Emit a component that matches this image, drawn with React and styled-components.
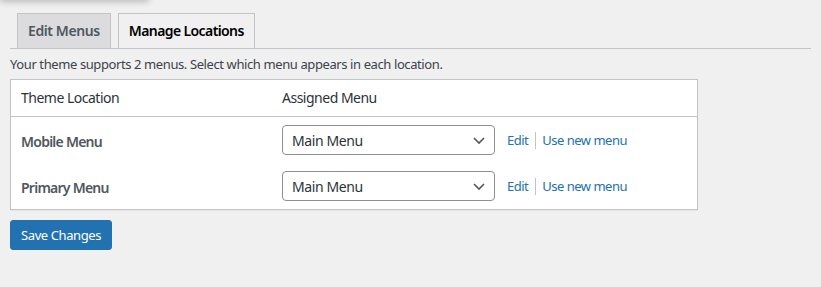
import React from "react";
import styled, { createGlobalStyle } from "styled-components";

const Global = createGlobalStyle`
  html, body { margin: 0; padding: 0; background: #f0f0f1; }
  body {
    font-family: "Noto Sans", "Open Sans", "DejaVu Sans", sans-serif;
    font-size: 13px;
    letter-spacing: -0.4px;
    color: #3c434a;
  }
`;

const Page = styled.div`
  position: relative;
  padding: 0 10px;
`;

const TopShadow = styled.div`
  position: absolute;
  left: 0;
  top: -20px;
  width: 149px;
  height: 20px;
  background: #f0f0f1;
  box-shadow: 0 2px 6px rgba(0, 0, 0, 0.22);
`;

const TabBar = styled.div`
  display: flex;
  padding-top: 13px;
  border-bottom: 1px solid #c3c4c7;
`;

const Tab = styled.div`
  margin-left: 7px;
  margin-bottom: -1px;
  padding: 5px 10px;
  line-height: 24px;
  font-size: 14px;
  font-weight: 600;
  letter-spacing: ${(p) => (p.$active ? "-0.6px" : "-0.4px")};
  border: 1px solid #c3c4c7;
  background: ${(p) => (p.$active ? "#f0f0f1" : "#dcdcde")};
  color: ${(p) => (p.$active ? "#000" : "#50575e")};
`;

const Intro = styled.p`
  margin: 5px 0 5px;
  line-height: 20px;
  color: #3c434a;
`;

const Table = styled.div`
  width: 688px;
  box-sizing: border-box;
  background: #fff;
  border: 1px solid #c3c4c7;
  box-shadow: 0 1px 1px rgba(0, 0, 0, 0.04);
  display: grid;
  grid-template-columns: 261px 1fr;
`;

const Th = styled.div`
  padding: 8px 10px;
  line-height: 20px;
  font-size: 14px;
  letter-spacing: -0.5px;
  color: #2c3338;
  border-bottom: 1px solid #c3c4c7;
`;

const Td = styled.div`
  padding: 8px 10px;
  display: flex;
  align-items: center;
  gap: 12px;
`;

const LocationLabel = styled.span`
  font-size: 14px;
  font-weight: 600;
  letter-spacing: -0.75px;
  color: #50575e;
  padding-top: 3px;
`;

const SelectBox = styled.div`
  box-sizing: border-box;
  width: 213px;
  height: 30px;
  border: 1px solid #8c8f94;
  border-radius: 4px;
  background: #fff;
  display: flex;
  align-items: center;
  justify-content: space-between;
  padding: 0 8px 0 9px;
  font-size: 14px;
  letter-spacing: -0.4px;
  color: #2c3338;
`;

const Links = styled.span`
  display: flex;
  align-items: center;
  font-size: 13px;
  letter-spacing: -0.5px;
`;

const Link = styled.a`
  color: #2271b1;
  text-decoration: none;
`;

const Sep = styled.span`
  display: inline-block;
  width: 1px;
  height: 17px;
  background: #c3c4c7;
  margin: 0 6px 0 7px;
`;

const SaveButton = styled.button`
  margin-top: 10px;
  height: 30px;
  padding: 0 10px;
  border: 1px solid #2271b1;
  border-radius: 3px;
  background: #2271b1;
  color: #fff;
  font-family: inherit;
  font-size: 13px;
  letter-spacing: -0.4px;
  cursor: pointer;
`;

const Chevron = () => (
  <svg width="14" height="14" viewBox="0 0 14 14" aria-hidden="true">
    <path d="M2 5l5 5 5-5" fill="none" stroke="#50575e" strokeWidth="1.6" />
  </svg>
);

const rows = ["Mobile Menu", "Primary Menu"];

export default function App() {
  return (
    <Page>
      <Global />
      <TopShadow />
      <TabBar>
        <Tab>Edit Menus</Tab>
        <Tab $active>Manage Locations</Tab>
      </TabBar>
      <Intro>Your theme supports 2 menus. Select which menu appears in each location.</Intro>
      <Table>
        <Th>Theme Location</Th>
        <Th>Assigned Menu</Th>
        {rows.map((r) => (
          <React.Fragment key={r}>
            <Td>
              <LocationLabel>{r}</LocationLabel>
            </Td>
            <Td>
              <SelectBox>
                <span>Main Menu</span>
                <Chevron />
              </SelectBox>
              <Links>
                <Link href="#">Edit</Link>
                <Sep />
                <Link href="#">Use new menu</Link>
              </Links>
            </Td>
          </React.Fragment>
        ))}
      </Table>
      <SaveButton>Save Changes</SaveButton>
    </Page>
  );
}
